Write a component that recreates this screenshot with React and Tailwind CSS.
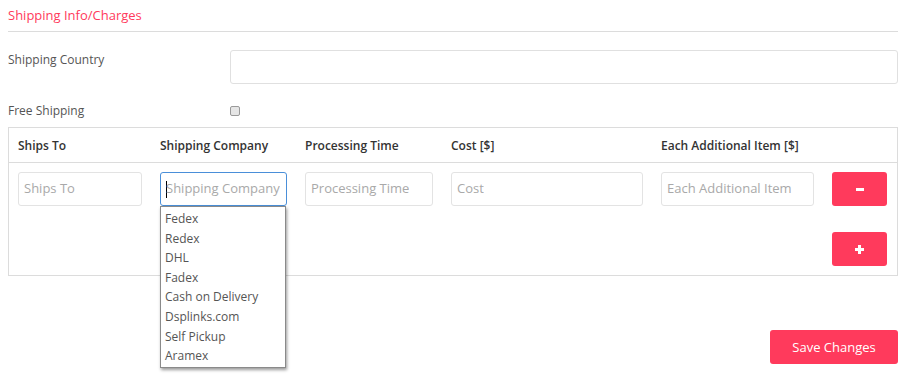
import React from "react";

const RED = "bg-[#ff3a5c]";

const companies = [
  "Fedex",
  "Redex",
  "DHL",
  "Fadex",
  "Cash on Delivery",
  "Dsplinks.com",
  "Self Pickup",
  "Aramex",
];

const Field = ({ placeholder, focused = false, children }) => (
  <div
    className={`relative h-[34px] rounded-[3px] border flex items-center px-[5px] text-[13px] text-[#a9a9a9] ${
      focused ? "border-[#4a8fd9]" : "border-[#e3e3e3]"
    }`}
  >
    {focused && <span className="w-px h-[17px] bg-black mr-[-1px]" />}
    <span className="whitespace-nowrap overflow-hidden">{placeholder}</span>
    {children}
  </div>
);

const App = () => {
  return (
    <div
      className="w-[908px] h-[381px] bg-white overflow-hidden pl-2 pr-[10px] text-[#555]"
      style={{ fontFamily: '"Open Sans", sans-serif' }}
    >
      <div className="h-[32px] border-b border-[#dcdcdc] flex items-center text-[13px] text-[#ff3a5c] pt-[1px]">
        Shipping Info/Charges
      </div>

      <div className="flex mt-[18px] h-[34px]">
        <div className="w-[222px] text-[12px] pt-[1px]">Shipping Country</div>
        <div className="flex-1 rounded-[3px] border border-[#e0e0e0]" />
      </div>

      <div className="flex items-center mt-[21px] h-[12px]">
        <div className="w-[222px] text-[12px]">Free Shipping</div>
        <div className="w-[10px] h-[10px] rounded-[2px] border border-[#9a9a9a] bg-[#e6e6e6]" />
      </div>

      <div className="mt-[10px] w-[890px] h-[149px] border border-[#dcdcdc]">
        <div className="h-[35px] border-b border-[#dcdcdc] grid grid-cols-[124px_127px_128px_192px_153px_55px] gap-x-[18px] pl-[9px] pt-[1px] items-center text-[12px] font-semibold text-[#333]">
          <div>Ships To</div>
          <div>Shipping Company</div>
          <div>Processing Time</div>
          <div>Cost [$]</div>
          <div>Each Additional Item [$]</div>
          <div />
        </div>
        <div className="grid grid-cols-[124px_127px_128px_192px_153px_55px] gap-x-[18px] gap-y-[26px] pl-[9px] pt-[9px]">
          <Field placeholder="Ships To" />
          <Field placeholder="Shipping Company" focused>
            <div className="absolute left-[-1px] top-[33px] w-[126px] bg-white border border-[#8a8a8a] shadow-[1px_2px_3px_rgba(0,0,0,0.4)] pt-[2px] pb-[1px] z-10">
              {companies.map((c) => (
                <div key={c} className="h-[19.6px] leading-[19.6px] pl-[4px] text-[12px] text-[#555]">
                  {c}
                </div>
              ))}
            </div>
          </Field>
          <Field placeholder="Processing Time" />
          <Field placeholder="Cost" />
          <Field placeholder="Each Additional Item" />
          <button className={`h-[34px] rounded-[3px] ${RED} text-white flex items-center justify-center`}>
            <span className="w-[8px] h-[3px] bg-white" />
          </button>
          <div className="col-start-6">
            <button className={`w-[55px] h-[34px] rounded-[3px] ${RED} text-white flex items-center justify-center`}>
              <svg width="9" height="9" viewBox="0 0 9 9">
                <rect x="3" y="0" width="3" height="9" fill="white" />
                <rect x="0" y="3" width="9" height="3" fill="white" />
              </svg>
            </button>
          </div>
        </div>
      </div>

      <div className="flex justify-end mt-[54px]">
        <button className={`w-[128px] h-[34px] rounded-[3px] ${RED} text-white text-[13px] pt-[1px]`}>
          Save Changes
        </button>
      </div>
    </div>
  );
};

export default App;
